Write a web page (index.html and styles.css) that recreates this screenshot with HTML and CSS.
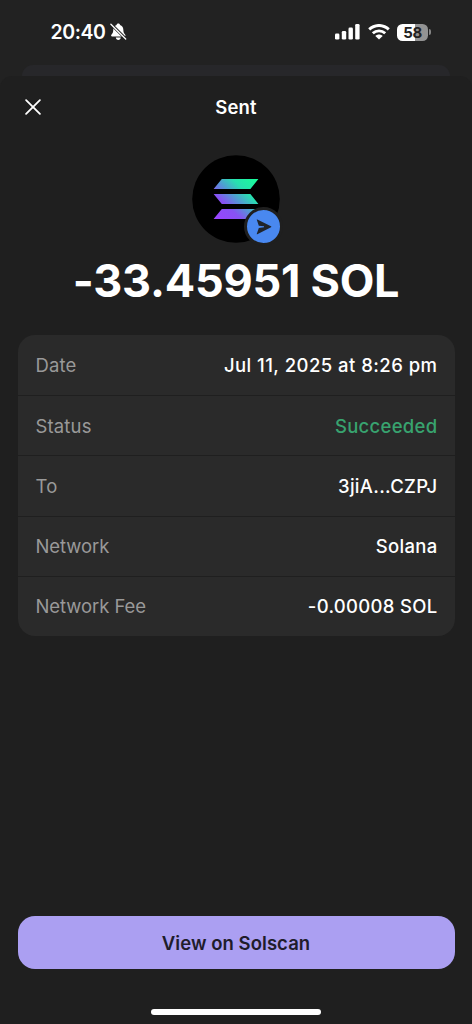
FILE: index.html
```html
<!DOCTYPE html>
<html lang="en">
<head>
<meta charset="utf-8">
<title>Sent</title>
<link rel="stylesheet" href="styles.css">
</head>
<body>
<div class="screen">
  <div class="status-bar">
    <div class="clock">
      <span class="time">20:40</span>
      <svg class="bell" width="17" height="18" viewBox="0 0 17 18">
        <path d="M8.3 .5C9.3 .5 9.9 1.1 10 1.9C12.2 2.6 13.2 4.3 13.3 6.6C13.4 10 14.2 10.6 15.2 11.8C15.8 12.7 15.4 13.5 14.4 13.5H2.2C1.2 13.5 .8 12.7 1.4 11.8C2.4 10.6 3.2 10 3.3 6.6C3.4 4.3 4.4 2.6 6.6 1.9C6.7 1.1 7.3 .5 8.3 .5ZM5.8 14.5H10.8C10.6 16.1 9.7 16.9 8.3 16.9S6 16.1 5.8 14.5Z" fill="#fff"/>
        <path d="M.9 1L16 16" stroke="#222" stroke-width="3"/>
        <path d="M.9 1.2L15.7 16" stroke="#fff" stroke-width="1.3" stroke-linecap="round"/>
      </svg>
    </div>
    <div class="indicators">
      <svg width="25" height="16" viewBox="0 0 25 16" fill="#fff">
        <rect x="0" y="9.4" width="4.4" height="6.1" rx="1.3"/>
        <rect x="6.8" y="7" width="4.4" height="8.5" rx="1.3"/>
        <rect x="13.5" y="3.6" width="4.4" height="11.9" rx="1.3"/>
        <rect x="20.2" y="0" width="4.4" height="15.5" rx="1.3"/>
      </svg>
      <svg class="wifi" width="22" height="16" viewBox="0 0 22 16" fill="none" stroke="#fff" stroke-width="2.9">
        <path d="M1.2 5.4C6.8 .1 15.2 .1 20.8 5.4"/>
        <path d="M4.8 9.3C8.4 6 13.6 6 17.2 9.3"/>
        <path d="M11 15.6L7.3 12.1C9.4 10.1 12.6 10.1 14.7 12.1Z" fill="#fff" stroke="none"/>
      </svg>
      <div class="battery"><span class="level">58</span></div>
      <span class="battery-tip"></span>
    </div>
  </div>
  <div class="back-sheet"></div>
  <main class="sheet">
    <header class="header">
      <svg class="close" width="16" height="16" viewBox="0 0 16 16"><path d="M1.1 1.1L14.9 14.9M14.9 1.1L1.1 14.9" stroke="#fff" stroke-width="1.8" stroke-linecap="round"/></svg>
      <h1 class="title">Sent</h1>
    </header>
    <div class="token">
      <svg width="88" height="88" viewBox="0 0 88 88">
        <defs>
          <linearGradient id="sol" gradientUnits="userSpaceOnUse" x1="25" y1="64" x2="63" y2="24">
            <stop offset="0" stop-color="#9945ff"/><stop offset=".3" stop-color="#8752f3"/>
            <stop offset=".5" stop-color="#5497d5"/><stop offset=".72" stop-color="#28e0b0"/><stop offset="1" stop-color="#19fb9b"/>
          </linearGradient>
        </defs>
        <circle cx="44" cy="44" r="43.8" fill="#000"/>
        <path d="M29.8 24H66.4L58.4 34H21.6ZM21.6 39H58.4L66.4 49H29.8ZM29.8 54H66.4L58.4 64H21.6Z" fill="url(#sol)"/>
      </svg>
      <div class="badge">
        <svg width="16" height="16" viewBox="0 0 16 16"><path d="M.8 .8Q.5 .1 1.3 .4L15 7.3Q15.8 7.8 15 8.3L1.3 15.3Q.5 15.5 .8 14.8L2.8 8.9L8 8.3V7.3L2.8 6.8Z" fill="#20242b"/></svg>
      </div>
    </div>
    <div class="amount">-33.45951 SOL</div>
    <dl class="details">
      <div class="row"><dt>Date</dt><dd class="date">Jul 11, 2025 at 8:26 pm</dd></div>
      <div class="row"><dt>Status</dt><dd class="success">Succeeded</dd></div>
      <div class="row"><dt>To</dt><dd class="address">3jiA...CZPJ</dd></div>
      <div class="row"><dt class="network">Network</dt><dd>Solana</dd></div>
      <div class="row"><dt class="network">Network Fee</dt><dd>-0.00008 SOL</dd></div>
    </dl>
    <button class="action">View on Solscan</button>
    <div class="home-indicator"></div>
  </main>
</div>
</body>
</html>
```

FILE: styles.css
```css
* { box-sizing: border-box; }
body { margin: 0; background: #222; }
.screen {
  width: 472px;
  height: 1024px;
  display: flex;
  flex-direction: column;
  overflow: hidden;
  background: #222;
  color: #fff;
  font-family: Inter, "Liberation Sans", sans-serif;
}
.status-bar {
  height: 65px;
  flex: none;
  display: flex;
  justify-content: space-between;
  align-items: flex-start;
  padding: 20px 41px 0 50.5px;
}
.clock, .indicators { display: flex; align-items: center; height: 24px; }
.clock { gap: 4px; }
.time { font-size: 19.5px; font-weight: 600; letter-spacing: -0.4px; }
.wifi { margin-left: 8px; }
.battery {
  width: 31px;
  height: 17px;
  margin-left: 7.5px;
  border-radius: 5.5px;
  background: linear-gradient(90deg, #fff 58%, #939393 58%);
  display: flex;
  align-items: center;
  justify-content: center;
}
.level { color: #222; font-size: 15px; line-height: 17px; font-weight: 700; letter-spacing: -0.5px; }
.battery-tip { width: 2px; height: 6px; margin-left: 1px; border-radius: 0 3px 3px 0; background: #858585; }
.back-sheet {
  height: 11px;
  flex: none;
  margin: 0 22px;
  border-radius: 11px 11px 0 0;
  background: #27272a;
}
.sheet {
  flex: 1;
  display: flex;
  flex-direction: column;
  align-items: center;
  padding: 0 17.5px;
  border-radius: 12px 12px 0 0;
  background: #1f1f1f;
}
.header {
  width: 100%;
  height: 61px;
  display: grid;
  grid-template-columns: 16px 1fr 16px;
  align-items: center;
  padding: 0 7.5px;
}
.title { margin: 0; text-align: center; font-size: 18.5px; font-weight: 600; letter-spacing: 0.2px; }
.token { position: relative; width: 88px; height: 88px; margin-top: 18px; }
.badge {
  position: absolute;
  left: 52px;
  top: 52px;
  width: 39px;
  height: 39px;
  border: 3.5px solid #1f1f1f;
  border-radius: 50%;
  background: #4988f0;
  display: flex;
  align-items: center;
  justify-content: center;
}
.amount { height: 54px; margin-top: 11px; line-height: 54px; font-size: 45px; font-weight: 700; white-space: nowrap; letter-spacing: -0.25px; }
.details {
  width: 100%;
  margin: 27px 0 0;
  border-radius: 17px;
  background: #2a2a2a;
  overflow: hidden;
}
.row {
  height: 60.2px;
  display: flex;
  align-items: center;
  justify-content: space-between;
  padding: 0 17px 0 18px;
  font-size: 18.5px;
  letter-spacing: 0.3px;
}
.row + .row { border-top: 1px solid #1f1f1f; }
dt { color: #999; letter-spacing: 0.15px; }
dd { margin: 0; font-weight: 500; }
.network { letter-spacing: -0.08px; }
.date { letter-spacing: 0.46px; }
.success { color: #38a36f; }
.action {
  width: 100%;
  height: 53px;
  margin-top: auto;
  border: 0;
  border-radius: 17px;
  background: #ab9ff2;
  color: #201c2b;
  font: 600 18.5px Inter, "Liberation Sans", sans-serif;
  letter-spacing: 0.05px;
}
.home-indicator { width: 170px; height: 6px; margin: 40px 0 9px; border-radius: 3px; background: #fff; }
```
